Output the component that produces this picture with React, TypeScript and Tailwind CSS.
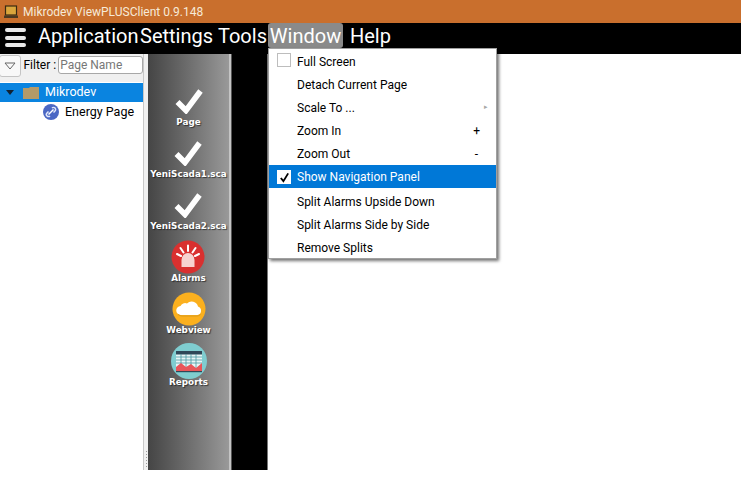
import React from "react";

const seg = "font-['Roboto','Noto_Sans',sans-serif]";

function Check() {
  return (
    <svg viewBox="0 0 28 26" width="28" height="26">
      <path d="M2.5 14 L11 22.5 L25.5 3" fill="none" stroke="#fff" strokeWidth="5.6" strokeLinejoin="miter" />
    </svg>
  );
}

function Alarm() {
  return (
    <svg viewBox="0 0 34 34" width="34" height="34">
      <circle cx="17" cy="17" r="16.5" fill="#d9302f" />
      <path d="M10.5 27 V20 a6.5 7 0 0 1 13 0 V27 Z" fill="#f7d3d0" />
      <path d="M17 5.5 V11 M9.5 8 L12.5 12.5 M24.5 8 L21.5 12.5 M6 14 L10 16 M28 14 L24 16" stroke="#fff" strokeWidth="2" strokeLinecap="round" />
    </svg>
  );
}

function Cloud() {
  return (
    <svg viewBox="0 0 34 34" width="34" height="34">
      <circle cx="17" cy="17" r="16.5" fill="#fbb01e" />
      <path d="M9 23 a4.5 4.5 0 0 1 -0.5 -9 a5 5 0 0 1 6.5 -2.5 a6.5 6.5 0 0 1 11 3 a4.4 4.4 0 0 1 -0.5 8.5 Z" fill="#fff" />
      <path d="M6 22.5 q2 1.5 4 1.5 h15 q2 0 3.5 -1.5" stroke="#d99a1c" strokeWidth="1" fill="none" />
    </svg>
  );
}

function Report() {
  return (
    <svg viewBox="0 0 36 36" width="36" height="36">
      <circle cx="18" cy="18" r="18" fill="#7fcdd0" />
      <rect x="5" y="8" width="26" height="21" fill="#e8f6f6" />
      <rect x="5" y="8" width="26" height="3.5" fill="#2f4858" />
      <path d="M5 14 H31 M5 17 H31 M5 20 H31 M10 11 V29 M15 11 V29 M20 11 V29 M25 11 V29" stroke="#4a9aa3" strokeWidth="0.8" />
      <path d="M5 28 V24 L10 20 L15 24 L20 21 L25 25 L31 20 V28 Z" fill="#e8565a" />
      <rect x="5" y="28" width="26" height="1.2" fill="#2f4858" />
    </svg>
  );
}

function SideItem({ icon, label }: { icon: React.ReactNode; label: string }) {
  return (
    <div className="flex flex-col items-center">
      <div className="h-[34px] flex items-center justify-center">{icon}</div>
      <span className="-mt-[2px] font-['DejaVu_Sans',sans-serif] font-bold text-[8.8px] leading-[12px] text-white whitespace-nowrap [text-shadow:1px_1px_1px_rgba(0,0,0,0.55)]">
        {label}
      </span>
    </div>
  );
}

function MenuRow({ label, right, active, box }: { label: string; right?: React.ReactNode; active?: boolean; box?: "empty" | "check" }) {
  return (
    <div className={`relative h-[23px] flex items-center pl-[28px] pr-[16px] text-[12px] ${active ? "bg-[#0078d7] text-white" : "text-black"}`}>
      {box === "empty" && <span className="absolute left-[8px] top-[3px] w-[14px] h-[14px] border border-[#bdbdbd] bg-white" />}
      {box === "check" && (
        <span className="absolute left-[8px] top-[5px] w-[14px] h-[14px] bg-white flex items-center justify-center">
          <svg viewBox="0 0 12 12" width="11" height="11">
            <path d="M2 6.5 L4.8 10 L10 1.5" fill="none" stroke="#000" strokeWidth="2" />
          </svg>
        </span>
      )}
      <span className="flex-1">{label}</span>
      {right}
    </div>
  );
}

export default function App() {
  return (
    <div className={`relative w-[741px] h-[478px] bg-white overflow-hidden ${seg}`}>
      {/* title bar */}
      <div className="h-[23px] bg-[#c96f2d] flex items-center pl-[3px]">
        <svg viewBox="0 0 16 14" width="16" height="14" className="mr-[4px]">
          <rect x="2.5" y="1" width="11" height="9" fill="#d9a53c" stroke="#3a2a12" strokeWidth="1.2" />
          <rect x="1" y="10.5" width="14" height="2.5" fill="#4a3a22" />
        </svg>
        <span className="text-[12px] text-[#f6ead8]">Mikrodev ViewPLUSClient 0.9.148</span>
      </div>

      {/* menu bar */}
      <div className="h-[31px] bg-black flex items-start text-white text-[20px] leading-[24px]">
        <div className="w-[38px] pl-[5px] pt-[5px] flex flex-col gap-[3.5px]">
          <span className="block w-[21px] h-[4px] rounded-[2px] bg-[#e8e8e8]" />
          <span className="block w-[21px] h-[4px] rounded-[2px] bg-[#e8e8e8]" />
          <span className="block w-[21px] h-[4px] rounded-[2px] bg-[#e8e8e8]" />
        </div>
        <span className="w-[102px] pt-[1px]">Application</span>
        <span className="w-[78px] pt-[1px]">Settings</span>
        <span className="w-[50px] pt-[1px]">Tools</span>
        <span className="w-[75px] h-[25px] pt-[1px] rounded-[3px] bg-[#8a8a8a] text-center">Window</span>
        <span className="ml-[7px] pt-[1px]">Help</span>
      </div>

      {/* body */}
      <div className="flex h-[416px]">
        {/* left panel */}
        <div className="w-[144px] bg-white border-r border-[#c8c8c8] flex flex-col">
          <div className="h-[28px] bg-[#f0f0f0] flex items-start pt-[1px]">
            <div className="w-[23px] h-[22px] bg-[#f8f8f8] border border-[#c4c4c4] rounded-[3px] flex items-center justify-center -ml-[1px]">
              <svg viewBox="0 0 12 8" width="12" height="8">
                <path d="M1 1 H11 L6 7 Z" fill="none" stroke="#666" strokeWidth="1" />
              </svg>
            </div>
            <span className="text-[12px] leading-[20px] text-black ml-[2px] mr-[2px] whitespace-nowrap">Filter :</span>
            <div className="w-[87px] h-[18px] mt-[1px] bg-white border border-[#a8a8a8] rounded-[3px] text-[12px] leading-[16px] text-[#777] pl-[1px]">Page Name</div>
          </div>
          <div className="pt-[1px]">
            <div className="h-[19px] bg-[#0a84e0] flex items-center text-white text-[12.5px]">
              <svg viewBox="0 0 8 6" width="8" height="6" className="ml-[6px]">
                <path d="M0 0 H8 L4 5 Z" fill="#123" />
              </svg>
              <svg viewBox="0 0 17 13" width="17" height="13" className="ml-[9px]">
                <path d="M0 2 H6 L7 1 H16 V13 H0 Z" fill="#b59a68" />
              </svg>
              <span className="ml-[5px]">Mikrodev</span>
            </div>
            <div className="h-[20px] flex items-center text-[12.5px] text-black">
              <svg viewBox="0 0 16 16" width="16" height="16" className="ml-[43px]">
                <circle cx="8" cy="8" r="8" fill="#4a67c4" />
                <path d="M5.5 10.5 L10.5 5.5" stroke="#fff" strokeWidth="1.5" />
                <path d="M7 12 a2 2 0 0 1 -3 -3 L5.5 7.5 M9 4 a2 2 0 0 1 3 3 L10.5 8.5" stroke="#dfe6fa" strokeWidth="1.5" fill="none" />
              </svg>
              <span className="ml-[6px]">Energy Page</span>
            </div>
          </div>
        </div>

        {/* splitter */}
        <div className="w-[4px] bg-[#f0f0f0] flex flex-col justify-end items-center gap-[2px] pb-[3px]">
          {[0, 1, 2, 3, 4, 5].map((i) => (
            <span key={i} className="block w-[1px] h-[1px] bg-[#9a9a9a]" />
          ))}
        </div>

        {/* nav panel */}
        <div className="w-[81px] bg-gradient-to-r from-[#454545] to-[#999999] flex flex-col items-center pt-[30px] gap-[8px]">
          <SideItem icon={<Check />} label="Page" />
          <SideItem icon={<Check />} label="YeniScada1.sca" />
          <SideItem icon={<Check />} label="YeniScada2.sca" />
          <SideItem icon={<Alarm />} label="Alarms" />
          <SideItem icon={<Cloud />} label="Webview" />
          <SideItem icon={<Report />} label="Reports" />
        </div>

        <div className="w-[3px] bg-[#c4c4c4] border-r border-[#555]" />
        <div className="w-[36px] bg-black border-r border-[#777]" />
        <div className="flex-1 bg-white" />
      </div>

      {/* dropdown */}
      <div className="absolute left-[268px] top-[48px] w-[229px] h-[211px] bg-white border border-[#a0a0a0] shadow-[2px_2px_3px_rgba(0,0,0,0.55)] pt-[1px]">
        <MenuRow label="Full Screen" box="empty" />
        <MenuRow label="Detach Current Page" />
        <MenuRow label="Scale To ..." right={<span className="text-[#a8a8a8] text-[7px] mr-[-8px]">▸</span>} />
        <MenuRow label="Zoom In" right={<span>+</span>} />
        <MenuRow label="Zoom Out" right={<span className="mr-[2px]">-</span>} />
        <MenuRow label="Show Navigation Panel" box="check" active />
        <div className="h-[2px]" />
        <MenuRow label="Split Alarms Upside Down" />
        <MenuRow label="Split Alarms Side by Side" />
        <MenuRow label="Remove Splits" />
      </div>
    </div>
  );
}
